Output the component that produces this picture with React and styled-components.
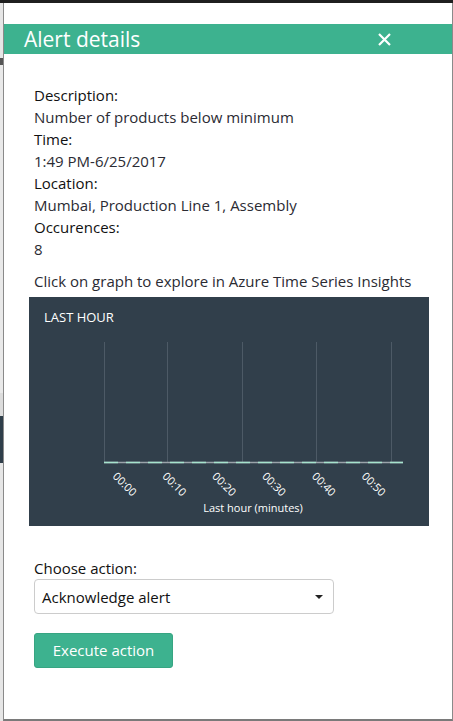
import styled, { createGlobalStyle } from "styled-components";

const GlobalStyle = createGlobalStyle`
  html, body {
    margin: 0;
    padding: 0;
    background: #fff;
  }
  body {
    font-family: "Open Sans", "Noto Sans", sans-serif;
    color: #222;
  }
`;

const green = "#3db28f";

const Page = styled.div`
  display: flex;
  width: 453px;
  height: 721px;
  box-sizing: border-box;
  border-top: 3px solid #1f1f1f;
  background: linear-gradient(
    to bottom,
    #e6e6e6 0,
    #e6e6e6 55px,
    #555 55px,
    #555 62px,
    #e9e9e9 62px,
    #e9e9e9 390px,
    #dcdcdc 390px,
    #dcdcdc 413px,
    #2f3e4a 413px,
    #2f3e4a 460px,
    #e6e6e6 460px
  );
`;

const Panel = styled.div`
  flex: 1;
  margin-left: 3px;
  border-left: 1px solid #8a8a8a;
  border-right: 1px solid #8a8a8a;
  border-bottom: 2px solid #7a7a7a;
  background: #fff;
  padding-top: 21px;
  display: flex;
  flex-direction: column;
`;

const Header = styled.div`
  height: 30px;
  background: ${green};
  display: flex;
  align-items: center;
  justify-content: space-between;
  padding: 0 61px 0 20px;
`;

const Title = styled.h2`
  margin: 0;
  font-size: 21px;
  font-weight: 400;
  color: #fff;
`;

const Close = styled.button`
  all: unset;
  color: #fff;
  display: flex;
  cursor: pointer;
`;

const Body = styled.div`
  padding: 30px 23px 0 30px;
  display: flex;
  flex-direction: column;
`;

const Label = styled.div`
  font-size: 15px;
  line-height: 22px;
  color: #111;
`;

const Value = styled.div`
  font-size: 15px;
  line-height: 22px;
  color: #2b2b33;
`;

const Hint = styled.div`
  font-size: 15px;
  line-height: 22px;
  margin-top: 10px;
  color: #2b2b33;
`;

const Chart = styled.div`
  margin: 5px 0 0 -5px;
  width: 400px;
  height: 229px;
  background: #313f4b;
  color: #fff;
  position: relative;
`;

const ChartTitle = styled.div`
  position: absolute;
  left: 15px;
  top: 11px;
  font-size: 13px;
`;

const ActionLabel = styled.div`
  margin-top: 31px;
  font-size: 15px;
  line-height: 22px;
  color: #111;
`;

const Select = styled.div`
  width: 300px;
  height: 35px;
  box-sizing: border-box;
  border: 1px solid #ccc;
  border-radius: 4px;
  display: flex;
  align-items: center;
  justify-content: space-between;
  padding: 0 10px 0 7px;
  font-size: 15px;
  color: #111;
`;

const Caret = styled.span`
  width: 0;
  height: 0;
  border-left: 4px solid transparent;
  border-right: 4px solid transparent;
  border-top: 4px solid #222;
`;

const Button = styled.button`
  all: unset;
  margin-top: 19px;
  width: 139px;
  height: 35px;
  box-sizing: border-box;
  background: ${green};
  border: 1px solid #37a582;
  border-radius: 3px;
  color: #fff;
  font-size: 15px;
  text-align: center;
  line-height: 33px;
  cursor: pointer;
`;

const details = [
  ["Description:", "Number of products below minimum"],
  ["Time:", "1:49 PM-6/25/2017"],
  ["Location:", "Mumbai, Production Line 1, Assembly"],
  ["Occurences:", "8"],
];

const grid = [75, 138, 213, 287, 362];
const ticks = ["00:00", "00:10", "00:20", "00:30", "00:40", "00:50"];

const LastHourChart = () => (
  <svg width="400" height="229" style={{ display: "block" }}>
    {grid.map((x) => (
      <line key={x} x1={x + 0.5} y1="45" x2={x + 0.5} y2="165" stroke="#4d5a66" />
    ))}
    <line x1="75" y1="165.5" x2="374" y2="165.5" stroke="#9aa3aa" strokeWidth="1.5" />
    <line
      x1="75"
      y1="165.5"
      x2="374"
      y2="165.5"
      stroke="#a6e3cd"
      strokeWidth="1.5"
      strokeDasharray="14 8"
    />
    {ticks.map((t, i) => {
      const x = 83 + i * 49.8;
      return (
        <text
          key={t}
          x={x}
          y="180"
          fill="#fff"
          fontSize="11"
          fontFamily="Open Sans, sans-serif"
          transform={`rotate(45 ${x} 180)`}
        >
          {t}
        </text>
      );
    })}
    <text
      x="224"
      y="215"
      fill="#fff"
      fontSize="11"
      textAnchor="middle"
      fontFamily="Open Sans, sans-serif"
    >
      Last hour (minutes)
    </text>
  </svg>
);

export default function App() {
  return (
    <>
      <GlobalStyle />
      <Page>
        <Panel>
          <Header>
            <Title>Alert details</Title>
            <Close>
              <svg width="13" height="13" viewBox="0 0 13 13">
                <path d="M1 1 L12 12 M12 1 L1 12" stroke="#fff" strokeWidth="2.2" />
              </svg>
            </Close>
          </Header>
          <Body>
            {details.map(([label, value]) => (
              <div key={label}>
                <Label>{label}</Label>
                <Value>{value}</Value>
              </div>
            ))}
            <Hint>Click on graph to explore in Azure Time Series Insights</Hint>
            <Chart>
              <ChartTitle>LAST HOUR</ChartTitle>
              <LastHourChart />
            </Chart>
            <ActionLabel>Choose action:</ActionLabel>
            <Select>
              <span>Acknowledge alert</span>
              <Caret />
            </Select>
            <Button>Execute action</Button>
          </Body>
        </Panel>
      </Page>
    </>
  );
}
